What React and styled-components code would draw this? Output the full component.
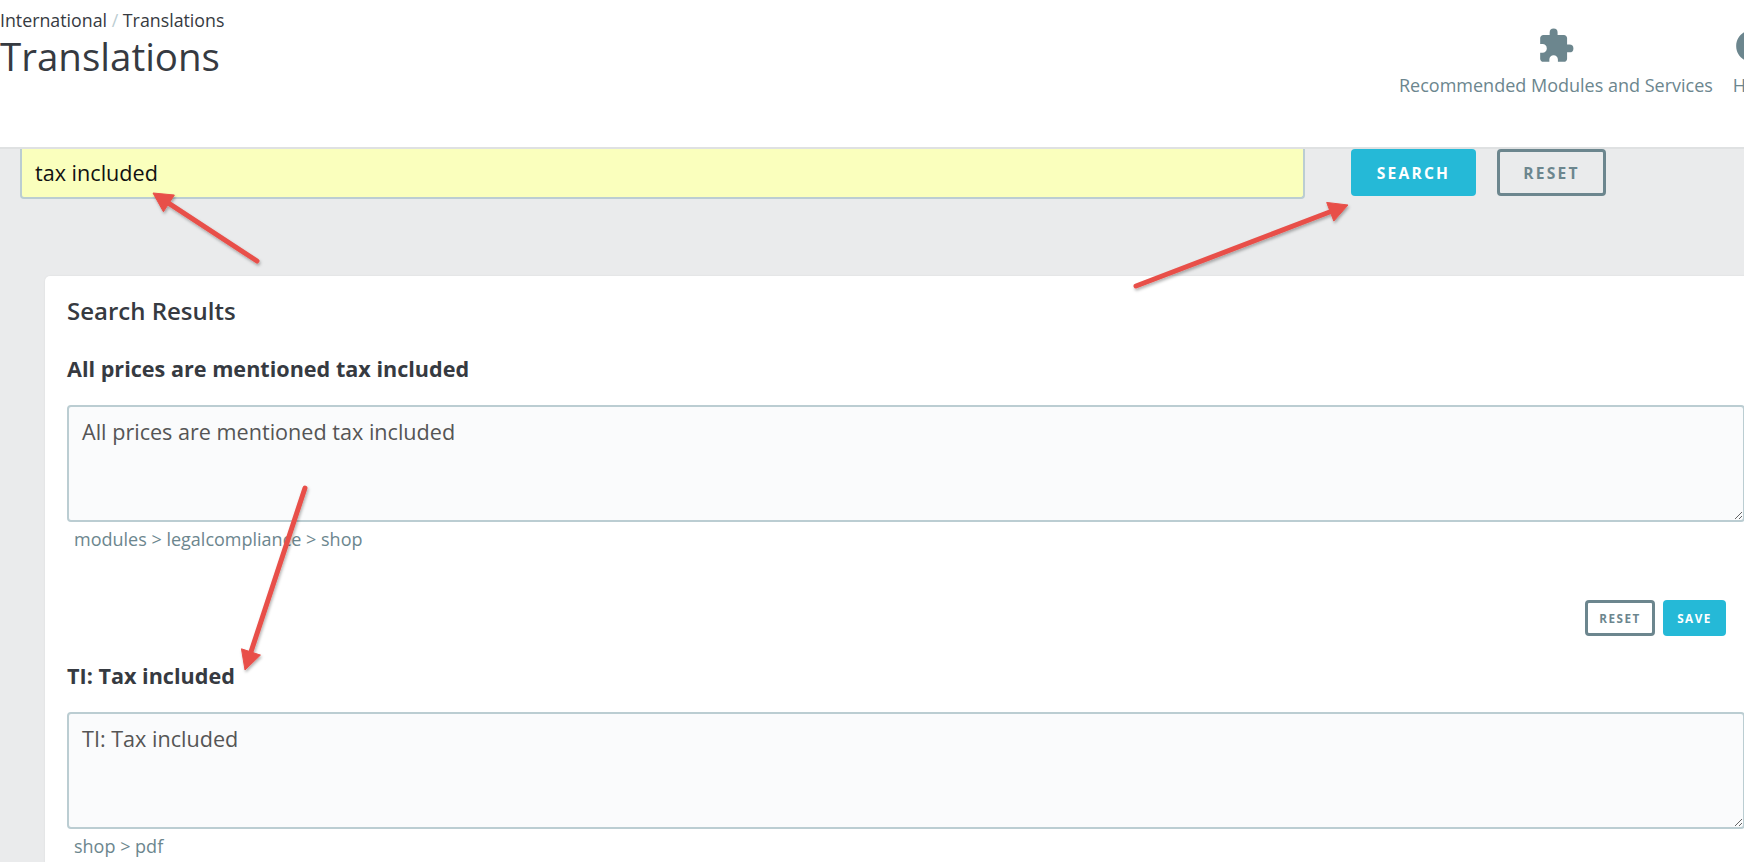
import React from "react";
import styled, { createGlobalStyle } from "styled-components";
import { MdExtension, MdHelp } from "react-icons/md";

const Global = createGlobalStyle`
  html, body { margin: 0; padding: 0; height: 100%; overflow: hidden; background: #eaebec; }
  body { font-family: "Open Sans", "Liberation Sans", sans-serif; }
`;
const Page = styled.div`
  position: relative;
  width: 1744px;
  height: 862px;
  overflow: hidden;
  background: #eaebec;
`;
const Header = styled.header`
  display: flex;
  height: 147px;
  background: #fff;
  border-bottom: 2px solid #dfe1e2;
`;
const TitleBlock = styled.div`
  flex: 0 0 1399px;
  padding-top: 9px;
`;
const Breadcrumb = styled.div`
  font-size: 17.8px;
  line-height: 22px;
  color: #363a41;
  span { color: #bbcdd2; }
`;
const Title = styled.h1`
  margin: 0;
  font-size: 38.5px;
  line-height: 50px;
  font-weight: 400;
  color: #363a41;
`;
const Actions = styled.nav`
  display: flex;
  gap: 20px;
  padding-top: 27px;
  flex-shrink: 0;
`;
const Action = styled.div`
  display: flex;
  flex-direction: column;
  align-items: center;
  gap: 8px;
  color: #6c868e;
  font-size: 18px;
  line-height: 24px;
  white-space: nowrap;
  svg { display: block; }
`;
const SearchRow = styled.div`
  display: flex;
  align-items: flex-start;
  padding-left: 20px;
`;
const SearchInput = styled.div`
  box-sizing: border-box;
  width: 1285px;
  height: 50px;
  margin-right: 46px;
  padding: 0 13px 2px;
  display: flex;
  align-items: center;
  background: #faffbd;
  border: 2px solid #bbcdd2;
  border-top: 0;
  border-radius: 0 0 4px 4px;
  font-size: 21.6px;
  color: #111;
`;
const BigButton = styled.div`
  box-sizing: border-box;
  display: flex;
  align-items: center;
  justify-content: center;
  height: 47px;
  width: ${(p) => p.$w}px;
  margin-right: ${(p) => p.$mr || 0}px;
  border-radius: 4px;
  font-size: 15.6px;
  font-weight: 700;
  letter-spacing: 2.2px;
  background: ${(p) => (p.$primary ? "#25b9d7" : "transparent")};
  color: ${(p) => (p.$primary ? "#fff" : "#6c868e")};
  border: ${(p) => (p.$primary ? "0" : "3px solid #6c868e")};
`;
const Card = styled.section`
  box-sizing: border-box;
  width: 1760px;
  margin: 77px 0 0 45px;
  padding: 19px 22px;
  background: #fff;
  border-radius: 5px 0 0 0;
  box-shadow: 0 0 2px rgba(0,0,0,.08);
`;
const CardTitle = styled.h2`
  margin: 0 0 28px;
  font-size: 24px;
  line-height: 32px;
  font-weight: 600;
  color: #363a41;
`;
const ItemTitle = styled.h3`
  margin: 0 0 22px;
  font-size: 21.6px;
  line-height: 28px;
  font-weight: 700;
  color: #363a41;
`;
const Area = styled.textarea`
  display: block;
  box-sizing: border-box;
  width: 1678px;
  height: 117px;
  padding: 11px 13px;
  background: #fafbfc;
  border: 2px solid #bbcdd2;
  border-radius: 4px;
  outline: 0;
  font-family: inherit;
  font-size: 21.6px;
  line-height: 28px;
  color: #555;
  resize: vertical;
`;
const Path = styled.div`
  margin: 5px 0 0 7px;
  font-size: 18px;
  line-height: 24px;
  color: #6c868e;
`;
const ItemActions = styled.div`
  display: flex;
  justify-content: flex-end;
  gap: 8px;
  width: 1659px;
  margin: 49px 0 26px;
`;
const SmallButton = styled.div`
  box-sizing: border-box;
  display: flex;
  align-items: center;
  justify-content: center;
  height: 36px;
  width: ${(p) => p.$w}px;
  border-radius: 4px;
  font-size: 11.7px;
  font-weight: 700;
  letter-spacing: 1.5px;
  background: ${(p) => (p.$primary ? "#25b9d7" : "#fff")};
  color: ${(p) => (p.$primary ? "#fff" : "#6c868e")};
  border: ${(p) => (p.$primary ? "0" : "3px solid #6c868e")};
`;
const Overlay = styled.svg`
  position: absolute;
  left: 0;
  top: 0;
  pointer-events: none;
`;

const Arrow = ({ x1, y1, x2, y2 }) => {
  const a = Math.atan2(y2 - y1, x2 - x1);
  const bx = x2 - Math.cos(a) * 19;
  const by = y2 - Math.sin(a) * 19;
  const nx = -Math.sin(a);
  const ny = Math.cos(a);
  const pts = `${x2},${y2} ${bx + nx * 10},${by + ny * 10} ${bx - nx * 10},${by - ny * 10}`;
  return (
    <g fill="#e8504a" stroke="#e8504a" filter="url(#sh)">
      <line x1={x1} y1={y1} x2={bx} y2={by} strokeWidth="5" strokeLinecap="round" />
      <polygon points={pts} strokeWidth="1" />
    </g>
  );
};

export default function App() {
  return (
    <Page>
      <Global />
      <Header>
        <TitleBlock>
          <Breadcrumb>International <span>/</span> Translations</Breadcrumb>
          <Title>Translations</Title>
        </TitleBlock>
        <Actions>
          <Action>
            <MdExtension size={38} />
            Recommended Modules and Services
          </Action>
          <Action>
            <MdHelp size={38} />
            Help
          </Action>
        </Actions>
      </Header>
      <SearchRow>
        <SearchInput>tax included</SearchInput>
        <BigButton $primary $w={125} $mr={21}>SEARCH</BigButton>
        <BigButton $w={109}>RESET</BigButton>
      </SearchRow>
      <Card>
        <CardTitle>Search Results</CardTitle>
        <ItemTitle>All prices are mentioned tax included</ItemTitle>
        <Area readOnly defaultValue="All prices are mentioned tax included" />
        <Path>modules &gt; legalcompliance &gt; shop</Path>
        <ItemActions>
          <SmallButton $w={70}>RESET</SmallButton>
          <SmallButton $primary $w={63}>SAVE</SmallButton>
        </ItemActions>
        <ItemTitle>TI: Tax included</ItemTitle>
        <Area readOnly defaultValue="TI: Tax included" />
        <Path>shop &gt; pdf</Path>
      </Card>
      <Overlay width="1744" height="862" viewBox="0 0 1744 862">
        <defs>
          <filter id="sh" x="-20%" y="-20%" width="140%" height="140%">
            <feDropShadow dx="1" dy="2" stdDeviation="1.5" floodColor="#000" floodOpacity="0.3" />
          </filter>
        </defs>
        <Arrow x1={257} y1={261} x2={153} y2={193} />
        <Arrow x1={1136} y1={286} x2={1348} y2={205} />
        <Arrow x1={305} y1={488} x2={245} y2={670} />
      </Overlay>
    </Page>
  );
}
